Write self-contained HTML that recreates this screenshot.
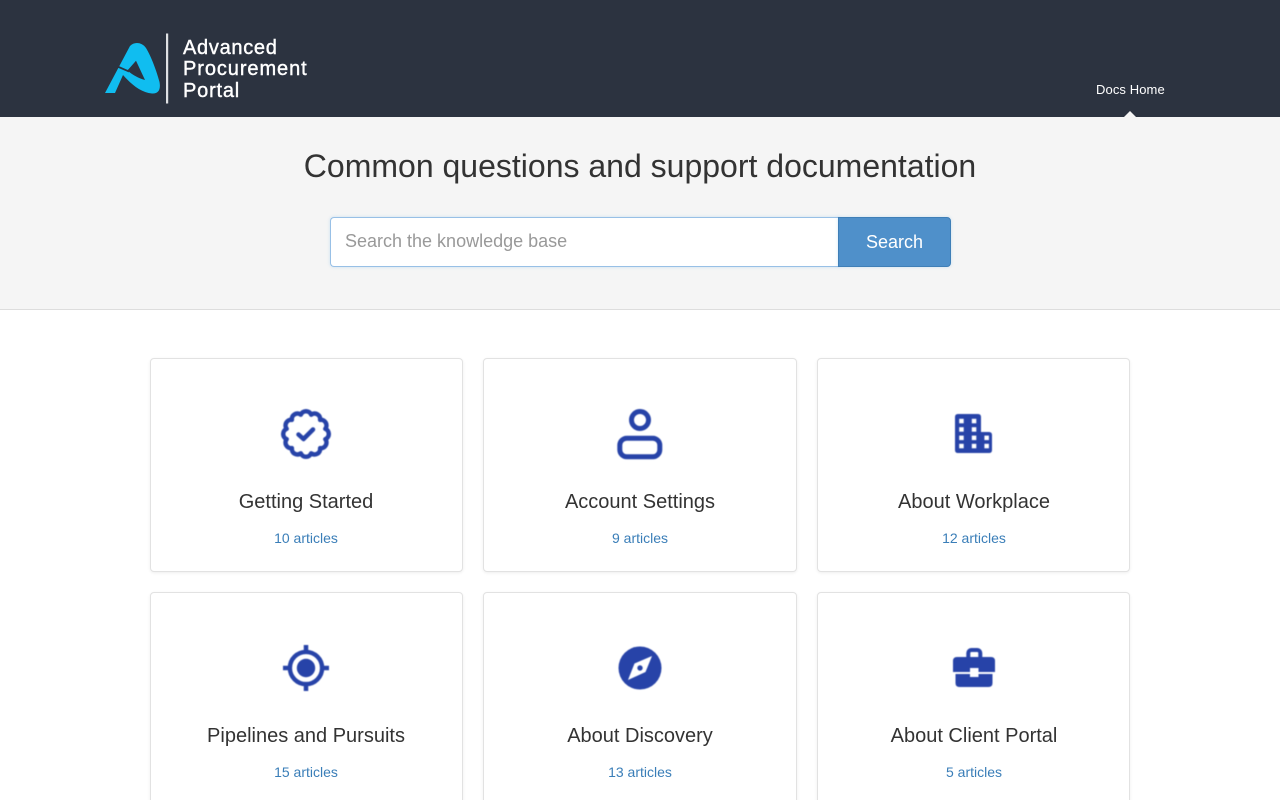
<!DOCTYPE html>
<html lang="en">
<head>
<meta charset="utf-8">
<title>Advanced Procurement Portal - Docs</title>
<style>
*{box-sizing:border-box}
html,body{margin:0;padding:0;width:1280px;height:800px;overflow:hidden;background:#fff;font-family:"Liberation Sans",sans-serif;color:#333}
#wrap{position:absolute;left:0;top:0;width:1280px;height:800px;overflow:hidden}
header{position:absolute;left:0;top:0;width:1280px;height:117px;background:#2c3340}
.logotext{position:absolute;left:183px;color:#fff;font-size:20px;line-height:24px;white-space:nowrap;-webkit-text-stroke:.4px #fff}
.nav{position:absolute;left:1096px;top:81px;font-size:13px;line-height:18px;color:#fff;white-space:nowrap;letter-spacing:.1px}
.caret{position:absolute;left:1124px;top:111px;width:0;height:0;border-left:6px solid transparent;border-right:6px solid transparent;border-bottom:6px solid #f5f5f5}
.hero{position:absolute;left:0;top:117px;width:1280px;height:193px;background:#f5f5f5;border-bottom:1px solid #ddd}
h1{position:absolute;left:0;top:28px;width:1280px;margin:0;text-align:center;font-size:32px;line-height:42px;font-weight:400;color:#333}
.input{position:absolute;left:330px;top:100px;width:509px;height:50px;background:#fff;border:1px solid #98c0e6;border-right:0;border-radius:4px 0 0 4px;padding-left:14px;font-size:18px;line-height:46px;color:#999;box-shadow:0 0 3px rgba(102,175,233,.3)}
.btn{position:absolute;left:838px;top:100px;width:113px;height:50px;background:#4f90ca;border:1px solid #3f7fb7;border-radius:0 4px 4px 0;color:#fff;font-size:18px;line-height:48px;text-align:center;box-shadow:0 0 3px rgba(102,175,233,.3)}
.card{position:absolute;height:214px;background:#fff;border:1px solid #e2e2e2;border-radius:4px;box-shadow:0 1px 3px rgba(0,0,0,.07);text-align:center}
.c1{left:150px;width:313px}.c2{left:483px;width:314px}.c3{left:817px;width:313px}
.r1{top:358px}.r2{top:592px}
.card h3{position:absolute;left:0;right:0;top:129px;margin:0;font-size:20px;line-height:28px;font-weight:400;color:#333}
.card span{position:absolute;left:0;right:0;top:169px;font-size:14px;line-height:20px;color:#3a7eb8}
.c1 h3,.c1 span{right:1px}
.c3 h3,.c3 span{left:1px}
svg{position:absolute;overflow:visible}
.icons{filter:blur(.4px)}
</style>
</head>
<body>
<div id="wrap">
<header>
  <svg style="left:0;top:0" width="320" height="117" viewBox="0 0 320 117">
    <path fill="#10bdf0" d="M130,46 C134,41.500 142,42 146,48 C151,56 157,72 159.500,82 C161,90 158,94 152,93.500 C141,92.500 132,85 123,75 L115,93 L105,93 Z"/>
    <path fill="#2c3340" d="M136,60.700 L145,80 C138,78 133,75 128,71 C127,70.500 127.500,70 128.300,69.500 Z"/>
    <path fill="none" stroke="#2c3340" stroke-width="1.800" d="M117.500,66.500 L129,71.500"/>
    <rect x="166" y="33.500" width="2.200" height="70" fill="#dfe1e4"/>
  </svg>
  <div class="logotext" style="top:35.500px;letter-spacing:.7px">Advanced</div>
  <div class="logotext" style="top:57px;letter-spacing:.92px">Procurement</div>
  <div class="logotext" style="top:79px;letter-spacing:.8px">Portal</div>
  <div class="nav">Docs Home</div>
  <div class="caret"></div>
</header>
<section class="hero">
  <h1>Common questions and support documentation</h1>
  <div class="input">Search the knowledge base</div>
  <div class="btn">Search</div>
</section>

<div class="card c1 r1"><h3>Getting Started</h3><span>10 articles</span></div>
<div class="card c2 r1"><h3>Account Settings</h3><span>9 articles</span></div>
<div class="card c3 r1"><h3>About Workplace</h3><span>12 articles</span></div>
<div class="card c1 r2"><h3>Pipelines and Pursuits</h3><span>15 articles</span></div>
<div class="card c2 r2"><h3>About Discovery</h3><span>13 articles</span></div>
<div class="card c3 r2"><h3>About Client Portal</h3><span>5 articles</span></div>

<svg class="icons" style="left:0;top:0" width="1280" height="800" viewBox="0 0 1280 800">
  <g fill="none" stroke="#2743a8" stroke-width="5" stroke-linecap="round" stroke-linejoin="round">
    <path stroke-width="4.500" transform="translate(306 434)" d="M5.180,-19.320 A5.600,5.600 0 0 1 14.140,-14.140 A5.600,5.600 0 0 1 19.320,-5.180 A5.600,5.600 0 0 1 19.320,5.180 A5.600,5.600 0 0 1 14.140,14.140 A5.600,5.600 0 0 1 5.180,19.320 A5.600,5.600 0 0 1 -5.180,19.320 A5.600,5.600 0 0 1 -14.140,14.140 A5.600,5.600 0 0 1 -19.320,5.180 A5.600,5.600 0 0 1 -19.320,-5.180 A5.600,5.600 0 0 1 -14.140,-14.140 A5.600,5.600 0 0 1 -5.180,-19.320 A5.600,5.600 0 0 1 5.180,-19.320 Z"/>
    <path stroke-width="4.500" d="M298.500,434.500 L303.500,439 L313,429.500"/>
    <circle cx="640" cy="420" r="8.500"/>
    <rect x="619.800" y="438.200" width="40" height="18.600" rx="7"/>
    <circle cx="306" cy="668" r="16.100" stroke-width="4.400"/>
    <path stroke-width="4.500" stroke-linecap="butt" d="M306,645 V652 M306,684 V691 M283,668 H290 M322,668 H329"/>
    <rect x="968.300" y="650" width="12" height="10" rx="3" stroke-width="4"/>
  </g>
  <g fill="#2743a8">
    <path d="M958,414 H978 Q981,414 981,417 V432 H989 Q992,432 992,435 V450 Q992,453 989,453 H958 Q955,453 955,450 V417 Q955,414 958,414 Z"/>
    <circle cx="306" cy="668" r="9.200"/>
    <circle cx="640" cy="668" r="21.500"/>
    <path d="M957,657 H991 Q995,657 995,661 V672 H953 V661 Q953,657 957,657 Z"/>
    <path d="M955.500,674 H992.500 V683 Q992.500,687 988.500,687 H959.500 Q955.500,687 955.500,683 Z"/>
  </g>
  <g fill="#fff">
    <rect x="959.200" y="418.800" width="4.500" height="4.500"/><rect x="971.800" y="418.800" width="4.500" height="4.500"/>
    <rect x="959.200" y="427.200" width="4.500" height="4.500"/><rect x="971.800" y="427.200" width="4.500" height="4.500"/>
    <rect x="959.200" y="435.600" width="4.500" height="4.500"/><rect x="971.800" y="435.600" width="4.500" height="4.500"/><rect x="984.400" y="435.600" width="4.500" height="4.500"/>
    <rect x="959.200" y="443.800" width="4.500" height="4.500"/><rect x="971.800" y="443.800" width="4.500" height="4.500"/><rect x="984.400" y="443.800" width="4.500" height="4.500"/>
    <path d="M652,656 L645.500,672 L628,680 L634.500,663.500 Z"/>
    <rect x="970" y="668" width="8.500" height="9"/>
  </g>
  <circle cx="640" cy="668" r="2.700" fill="#2743a8"/>
</svg>
</div>
</body>
</html>
